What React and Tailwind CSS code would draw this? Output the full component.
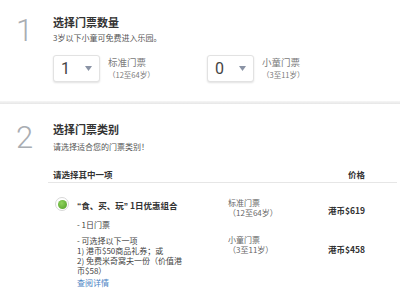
import React from 'react';

const Select = ({ value }) => (
  <div className="flex items-center justify-between w-[47px] h-[27px] rounded-[3px] border border-[#e2e2e2] bg-white shadow-[0_1px_2px_rgba(0,0,0,0.12)] pl-[7px] pr-[7px]">
    <span className="font-['Roboto'] text-[16px] leading-none text-[#444]">{value}</span>
    <svg width="7" height="5" viewBox="0 0 7 5">
      <path d="M0 0 H7 L3.5 5 Z" fill="#8a93a5" />
    </svg>
  </div>
);

const TicketQty = ({ value, label, age, width }) => (
  <div className={`flex items-start ${width}`}>
    <Select value={value} />
    <div className="ml-[8px] flex flex-col">
      <span className="mt-[1px] text-[9.5px] leading-[12px] text-[#7a7a7a]">{label}</span>
      <span className="mt-[2px] text-[7.5px] leading-[10px] text-[#7a7a7a]">{age}</span>
    </div>
  </div>
);

const Numeral = ({ children, top }) => (
  <div className={`w-[53px] pl-[16px] ${top}`}>
    <span className="font-['Roboto'] font-light text-[31px] leading-[31px] text-[#a9adb2]">{children}</span>
  </div>
);

export default function App() {
  return (
    <div className="w-[400px] h-[295px] overflow-hidden bg-white font-['Noto_Sans_CJK_SC',sans-serif] text-[#333]">
      {/* Step 1 */}
      <div className="flex items-start h-[101px]">
        <Numeral top="pt-[15px]">1</Numeral>
        <div className="flex-1 pt-[15px]">
          <div className="text-[11px] leading-[14px] font-bold text-[#333]">选择门票数量</div>
          <div className="mt-[4px] text-[8px] leading-[10px] text-[#555]">3岁以下小童可免费进入乐园。</div>
          <div className="mt-[12px] flex">
            <TicketQty value="1" label="标准门票" age="（12至64岁）" width="w-[154px]" />
            <TicketQty value="0" label="小童门票" age="（3至11岁）" width="w-[120px]" />
          </div>
        </div>
      </div>

      <div className="h-[3px] bg-linear-to-b from-[#f6f6f6] to-[#e6e6e6]" />

      {/* Step 2 */}
      <div className="flex items-start">
        <Numeral top="pt-[18px]">2</Numeral>
        <div className="flex-1 pt-[18px]">
          <div className="text-[11px] leading-[14px] font-bold text-[#333]">选择门票类别</div>
          <div className="mt-[6px] text-[8px] leading-[10px] text-[#555]">请选择适合您的门票类别！</div>

          <div className="mt-[17px] -ml-[5px] mr-[3px]">
            <div className="flex justify-between pl-[5px] pr-[32px] pb-[3px] border-b border-[#e6e6e6] text-[8.5px] leading-[10px] font-bold text-[#333]">
              <span>请选择其中一项</span>
              <span>价格</span>
            </div>

            <div className="flex items-start pl-[5px]">
              <div className="flex items-start w-[175px] pl-[2px]">
                <div className="mt-[14px] w-[14px] h-[14px] shrink-0 rounded-full border border-[#d8d8d8] bg-white p-[1.5px]">
                  <div className="w-full h-full rounded-full bg-radial-[at_40%_35%] from-[#8fd35c] to-[#4e9a25]" />
                </div>
                <div className="ml-[8px] mt-[17px] text-[8px] text-[#444]">
                  <div className="leading-[10px] text-[8.5px] font-bold text-[#333]">
                    <span className="font-['Liberation_Sans']">“</span>食、买、玩<span className="font-['Liberation_Sans']">”</span> 1日优惠组合
                  </div>
                  <div className="mt-[9px] leading-[10px]">- 1日门票</div>
                  <div className="mt-[6px] leading-[10px]">
                    <div>- 可选择以下一项</div>
                    <div>1) 港币$50商品礼券；或</div>
                    <div>2) 免费米奇窝夫一份（价值港</div>
                    <div>币$58）</div>
                  </div>
                  <div className="mt-[2px] leading-[10px] text-[#4a82c3]">查阅详情</div>
                </div>
              </div>

              <div className="flex-1 pr-[32px] mt-[15px]">
                <div className="flex justify-between items-start">
                  <div className="text-[8px] leading-[10px] text-[#666]">
                    <div>标准门票</div>
                    <div>（12至64岁）</div>
                  </div>
                  <span className="mt-[7px] text-[8.5px] leading-[10px] font-bold text-[#333]">港币$619</span>
                </div>
                <div className="flex justify-between items-start mt-[17px]">
                  <div className="text-[8px] leading-[10px] text-[#666]">
                    <div>小童门票</div>
                    <div>（3至11岁）</div>
                  </div>
                  <span className="mt-[9px] text-[8.5px] leading-[10px] font-bold text-[#333]">港币$458</span>
                </div>
              </div>
            </div>
          </div>
        </div>
      </div>
    </div>
  );
}
